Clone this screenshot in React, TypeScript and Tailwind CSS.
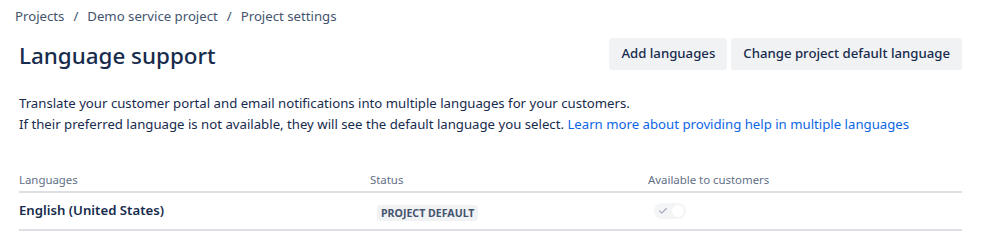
import { Check } from 'lucide-react'

const font = { fontFamily: '"Noto Sans", "Open Sans", sans-serif' }

export default function App() {
    return (
        <div className="w-[986px] h-[245px] bg-white text-[#172b4d] overflow-hidden" style={font}>
            {/* Breadcrumbs */}
            <nav className="flex items-center pl-[15px] pt-[8px] h-[20px] text-[13.2px] leading-[20px] text-[#44546f] mt-[2px]">
                <span>Projects</span>
                <span className="px-[9px]">/</span>
                <span>Demo service project</span>
                <span className="px-[9px]">/</span>
                <span>Project settings</span>
            </nav>

            {/* Header */}
            <div className="flex items-center justify-between pl-[19px] pr-[24px] mt-[16px] h-[32px]">
                <h1 className="text-[22.4px] leading-[28px] font-medium text-[#172b4d] pt-[3px]">Language support</h1>
                <div className="flex gap-[4px]">
                    <button className="h-[32px] px-[12px] rounded-[3px] bg-[#f1f2f4] text-[13.2px] font-medium text-[#172b4d]">Add languages</button>
                    <button className="h-[32px] px-[12px] rounded-[3px] bg-[#f1f2f4] text-[13.2px] font-medium text-[#172b4d]">Change project default language</button>
                </div>
            </div>

            {/* Description */}
            <div className="pl-[19px] mt-[23px] text-[13.2px] leading-[21px] text-[#172b4d]">
                <p>Translate your customer portal and email notifications into multiple languages for your customers.</p>
                <p>
                    If their preferred language is not available, they will see the default language you select.{' '}
                    <a className="text-[#0c66e4]">Learn more about providing help in multiple languages</a>
                </p>
            </div>

            {/* Table */}
            <div className="ml-[19px] mr-[24px] mt-[34px]">
                <div className="grid grid-cols-[351px_278px_1fr] h-[24px] items-center border-b-2 border-[#dcdfe4] text-[11.4px] text-[#626f86]">
                    <span>Languages</span>
                    <span>Status</span>
                    <span>Available to customers</span>
                </div>
                <div className="grid grid-cols-[358px_277px_1fr] h-[38px] items-center border-b-2 border-[#dcdfe4]">
                    <span className="text-[13.2px] font-semibold text-[#172b4d]">English (United States)</span>
                    <span>
                        <span className="inline-block px-[4px] h-[16px] leading-[16px] rounded-[3px] bg-[#f1f2f4] text-[10.6px] font-bold uppercase text-[#44546f]">Project default</span>
                    </span>
                    <span>
                        <span className="relative flex items-center w-[32px] h-[16px] rounded-full bg-[#f4f5f7]">
                            <Check className="ml-[4px] w-[10px] h-[10px] text-[#a5adba]" strokeWidth={3} />
                            <span className="absolute right-[2px] top-[2px] w-[12px] h-[12px] rounded-full bg-white" />
                        </span>
                    </span>
                </div>
            </div>
        </div>
    )
}
